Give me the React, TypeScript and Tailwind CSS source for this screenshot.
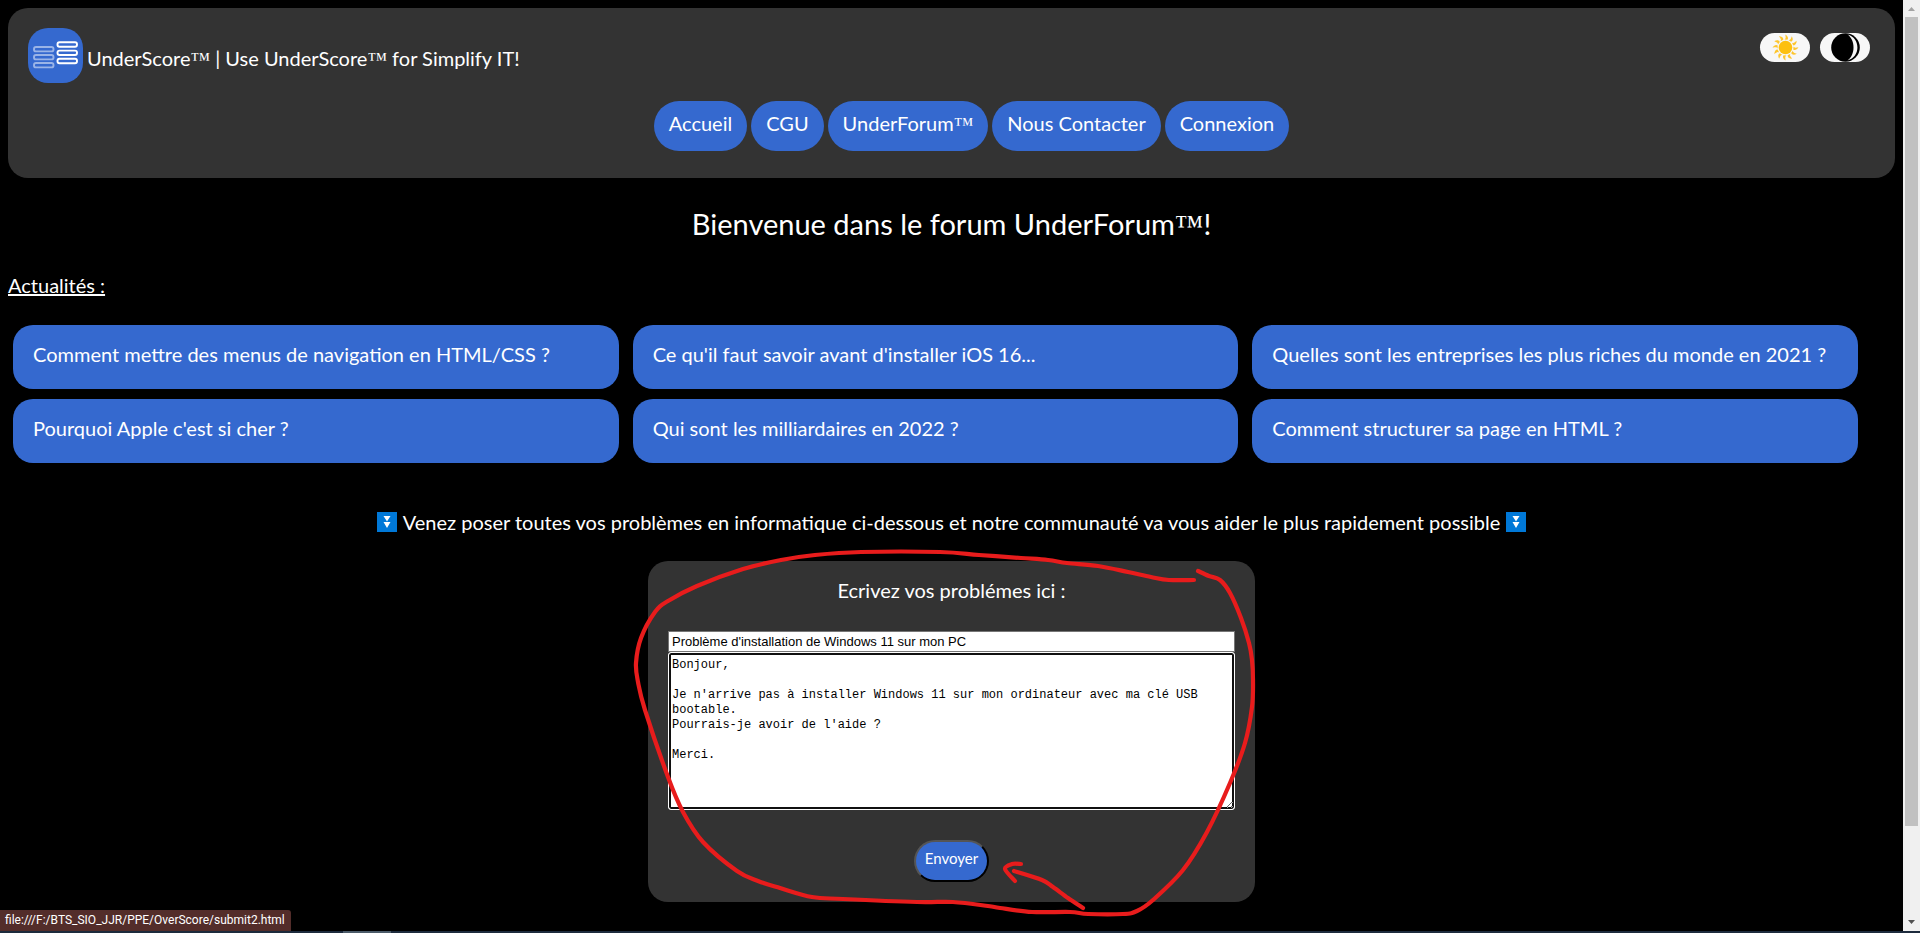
import React from "react";

type Point = [number, number];

const NEWS: string[] = [
  "Comment mettre des menus de navigation en HTML/CSS ?",
  "Ce qu'il faut savoir avant d'installer iOS 16...",
  "Quelles sont les entreprises les plus riches du monde en 2021 ?",
  "Pourquoi Apple c'est si cher ?",
  "Qui sont les milliardaires en 2022 ?",
  "Comment structurer sa page en HTML ?",
];

const MESSAGE =
  "Bonjour,\n\nJe n'arrive pas à installer Windows 11 sur mon ordinateur avec ma clé USB bootable.\nPourrais-je avoir de l'aide ?\n\nMerci.";

const LOOP: Point[] = [
  [1194, 580], [1169, 580], [1151, 577], [1128, 572], [1098, 566], [1067, 563], [1048, 560], [1021, 558],
  [979, 555], [940, 552], [861, 552], [815, 555], [781, 560], [743, 569], [697, 586], [668, 601], [655, 612],
  [641, 638], [636, 663], [638, 682], [645, 710], [668, 777], [683, 812], [703, 842], [737, 871], [758, 881],
  [780, 888], [812, 897], [843, 899], [917, 902], [953, 902], [988, 906], [1000, 908], [1032, 912],
  [1070, 912], [1088, 914], [1123, 914], [1137, 911], [1153, 900], [1183, 870], [1207, 832], [1230, 783],
  [1245, 743], [1252, 707], [1253, 680], [1252, 660], [1249, 643], [1241, 618], [1230, 593], [1220, 580],
  [1209, 576], [1198, 571],
];
const ARROW_SHAFT: Point[] = [[1083, 908], [1068, 898], [1053, 887], [1042, 880], [1014, 871]];
const ARROW_HEAD: Point[] = [[1021, 864], [1012, 864], [1005, 869], [1015, 881]];

/* Catmull-Rom spline through the points, as cubic segments */
function smooth(points: Point[]): string {
  let d = `M${points[0][0]} ${points[0][1]}`;
  for (let i = 0; i < points.length - 1; i++) {
    const a = points[Math.max(i - 1, 0)];
    const b = points[i];
    const c = points[i + 1];
    const e = points[Math.min(i + 2, points.length - 1)];
    d += `C${b[0] + (c[0] - a[0]) / 6} ${b[1] + (c[1] - a[1]) / 6} ${c[0] - (e[0] - b[0]) / 6} ${c[1] - (e[1] - b[1]) / 6} ${c[0]} ${c[1]}`;
  }
  return d;
}

function Tm() {
  return <span className="font-['Liberation_Serif',serif] leading-none">™</span>;
}

function Logo() {
  return (
    <svg viewBox="0 0 55 55" className="size-[55px] shrink-0 rounded-[20px] bg-[#3569cf]" fill="none" strokeWidth="1.9" aria-hidden="true">
      <g stroke="#9ab4e7">
        <rect x="6" y="19" width="19.5" height="4.4" rx="2" />
        <rect x="6" y="27" width="19.5" height="4.4" rx="2" />
        <rect x="6" y="35" width="19.5" height="4.4" rx="2" />
      </g>
      <g stroke="#ffffff">
        <rect x="29.5" y="14.3" width="19.5" height="4.4" rx="2" />
        <rect x="29.5" y="22.6" width="19.5" height="4.4" rx="2" />
        <rect x="29.5" y="30.8" width="19.5" height="4.4" rx="2" />
      </g>
    </svg>
  );
}

function Sun() {
  return (
    <svg viewBox="-14.5 -14.5 29 29" className="size-[29px]" aria-hidden="true">
      <circle r="6.8" fill="#fdc010" />
      {Array.from({ length: 12 }, (_, i) => (
        <path
          key={i}
          d="M-1.9 -7.9C0 -8.6 -0.8 -10.6 -1.3 -12.9C1.5 -11.6 2.4 -9.4 1.3 -7.9Z"
          fill="#fdc52e"
          transform={`rotate(${i * 30 + 5})`}
        />
      ))}
    </svg>
  );
}

function Moon() {
  return (
    <svg viewBox="-14.5 -14.5 29 29" className="size-[29px]" aria-hidden="true">
      <circle r="14.3" fill="#000000" />
      <path d="M2 -12.9C15.2 -9.5 15.2 9.5 2 12.9C10 7.5 10 -7.5 2 -12.9Z" fill="#f7f7f7" />
    </svg>
  );
}

function DownBadge() {
  return (
    <svg viewBox="0 0 20 20" className="size-5 shrink-0" aria-hidden="true">
      <rect width="20" height="20" fill="#0078d7" />
      <path d="M6.5 4h7L10 9.6zM6.5 10h7L10 16z" fill="#ffffff" />
    </svg>
  );
}

function NavLink({ children }: { children: React.ReactNode }) {
  return (
    <a href="#" className="rounded-[25px] bg-[#3569cf] px-[15px] pt-2.5 pb-4 leading-6">
      {children}
    </a>
  );
}

function Scrollbar() {
  return (
    <div className="flex w-[17px] shrink-0 flex-col items-center bg-[#f0f0f0]" aria-hidden="true">
      <svg viewBox="0 0 17 17" className="size-[17px]">
        <path d="M5 11h7L8.5 7z" fill="#a3a3a3" />
      </svg>
      <div className="w-[13px] flex-[809] bg-[#c1c1c1]" />
      <div className="flex-[88]" />
      <svg viewBox="0 0 17 17" className="size-[17px]">
        <path d="M5 6h7L8.5 10z" fill="#505050" />
      </svg>
    </div>
  );
}

export default function App() {
  return (
    <div className="flex min-h-screen flex-col bg-black font-[Lato,sans-serif] text-xl text-white">
      <div className="flex flex-1">
        <div className="relative min-w-0 flex-1 pt-2">
          <header className="mx-2 rounded-[20px] bg-[#333333] px-5 pt-5 pb-[27px]">
            <div className="flex items-start justify-between">
              <div className="flex items-center gap-1">
                <Logo />
                <p className="pt-1 leading-6">
                  UnderScore<Tm /> | Use UnderScore<Tm /> for Simplify IT!
                </p>
              </div>
              <div className="flex gap-2.5 pt-[5px] pr-[5px]">
                <button type="button" aria-label="Thème clair" className="flex h-[29px] w-[50px] items-center justify-center rounded-full bg-[#f7f7f7]">
                  <Sun />
                </button>
                <button type="button" aria-label="Thème sombre" className="flex h-[29px] w-[50px] items-center justify-center rounded-full bg-[#f7f7f7]">
                  <Moon />
                </button>
              </div>
            </div>
            <nav className="mt-[18px] flex justify-center gap-1 pl-10">
              <NavLink>Accueil</NavLink>
              <NavLink>CGU</NavLink>
              <NavLink>UnderForum<Tm /></NavLink>
              <NavLink>Nous Contacter</NavLink>
              <NavLink>Connexion</NavLink>
            </nav>
          </header>

          <main>
            <h1 className="mt-7 text-center text-[29px] leading-9">
              Bienvenue dans le forum UnderForum<Tm />!
            </h1>
            <h2 className="mx-2 mt-[31px] leading-6 underline">Actualités :</h2>
            <div className="mt-7 grid grid-cols-3 gap-x-3.5 gap-y-2.5 pr-[45px] pl-[13px]">
              {NEWS.map((title) => (
                <a key={title} href="#" className="rounded-[20px] bg-[#3569cf] px-5 pt-[17px] pb-[23px] leading-6">
                  {title}
                </a>
              ))}
            </div>

            <p className="mt-[47px] flex items-center justify-center gap-1.5 leading-6">
              <DownBadge />
              Venez poser toutes vos problèmes en informatique ci-dessous et notre communauté va vous aider le plus rapidement possible
              <DownBadge />
            </p>

            <form className="relative mx-auto mt-[27px] flex w-[607px] flex-col items-center rounded-[20px] bg-[#333333] px-5 pt-[17px] pb-5">
              <label htmlFor="subject" className="leading-6">Ecrivez vos problémes ici :</label>
              <input
                id="subject"
                type="text"
                defaultValue="Problème d'installation de Windows 11 sur mon PC"
                className="mt-[29px] h-[21px] w-full border border-[#767676] bg-white px-[3px] font-['Liberation_Sans',sans-serif] text-[13px] text-black"
              />
              <textarea
                aria-label="Votre message"
                defaultValue={MESSAGE}
                className="h-[158px] w-full rounded-[3px] border border-white bg-white px-[3px] pt-[5px] font-['Liberation_Mono',monospace] text-xs leading-[15px] text-black shadow-[inset_0_0_0_2px_#101010] outline-none"
              />
              <button
                type="button"
                className="mt-[30px] h-[42px] rounded-[21px] border-2 border-t-[#555555] border-r-black border-b-black border-l-[#555555] bg-[#3569cf] px-[9px] pb-1.5 text-[15px] leading-5"
              >
                Envoyer
              </button>
              <svg
                viewBox="648 561 607 341"
                className="pointer-events-none absolute inset-0 size-full overflow-visible"
                fill="none"
                stroke="#e81c1c"
                strokeWidth="4.2"
                strokeLinecap="round"
                strokeLinejoin="round"
                aria-hidden="true"
              >
                <path d={smooth(LOOP)} />
                <path d={smooth(ARROW_SHAFT)} />
                <path d={smooth(ARROW_HEAD)} />
              </svg>
            </form>
          </main>

          <div className="absolute bottom-0 left-0 rounded-tr-[3px] bg-[#532d2a] pr-1.5 pl-[5px] font-[Roboto,sans-serif] text-xs leading-[21px]">
            file:///F:/BTS_SIO_JJR/PPE/OverScore/submit2.html
          </div>
        </div>
        <Scrollbar />
      </div>
      <div className="flex h-0.5 bg-[#1d2b3d] pl-[343px]">
        <div className="w-12 bg-[#4b5b69]" />
      </div>
    </div>
  );
}
